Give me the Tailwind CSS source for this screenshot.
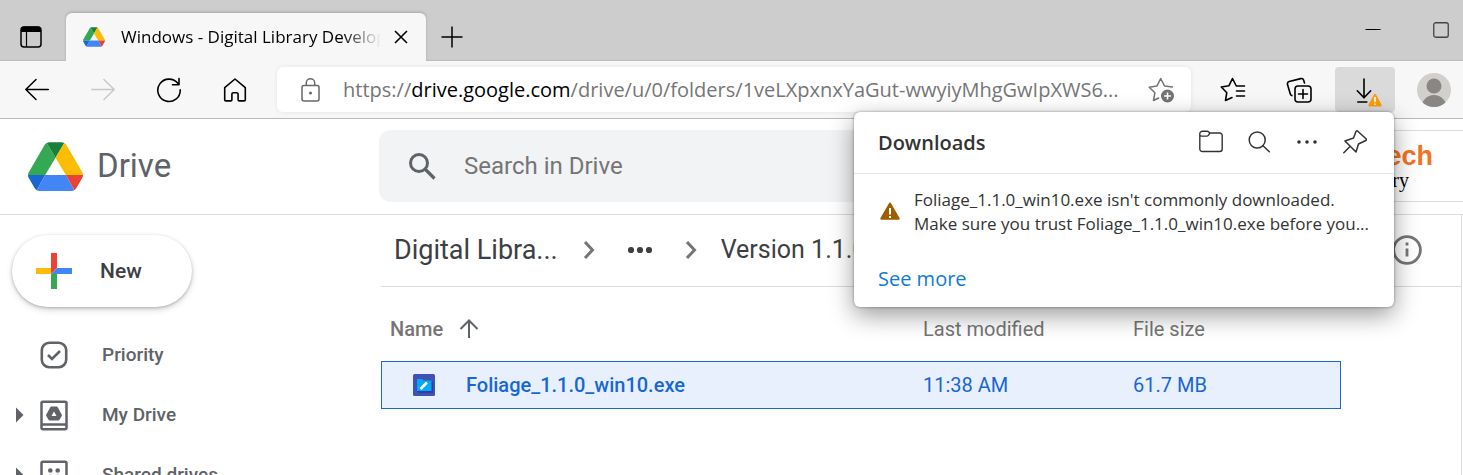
<!DOCTYPE html>
<html lang="en">
<head>
<meta charset="utf-8">
<meta name="viewport" content="width=device-width, initial-scale=1">
<title>Windows - Digital Library Development</title>
<script src="https://cdn.jsdelivr.net/npm/@tailwindcss/browser@4"></script>
</head>
<body class="flex h-screen flex-col overflow-hidden bg-white font-['Open_Sans','Noto_Sans',sans-serif] text-black">

<svg class="hidden" aria-hidden="true">
  <symbol id="drive" viewBox="0 0 88 78">
    <path fill="#34a853" d="M30 1.200 44 25 27.500 52.500H0Q0 50.500 1 48.500L26.500 4.500Q28 2 30 1.200z"/>
    <path fill="#188038" d="M30 1.200Q32 0 34.500 0h19Q56 0 58 1.200L44 25z"/>
    <path fill="#fbbc04" d="M58 1.200Q60 2.500 61.500 4.500L87 48.500Q88 50.500 88 52.500H60.500L44 25z"/>
    <path fill="#1967d2" d="M0 52.500h27.500L14 76.800Q12 75.500 10.500 73.500L1 57Q0 55 0 52.500z"/>
    <path fill="#ea4335" d="M88 52.500H60.500L74 76.800Q76 75.500 77.500 73.500L87 57Q88 55 88 52.500z"/>
    <path fill="#4285f4" d="M27.500 52.500h33L74 76.800Q72 78 69.500 78h-51Q16 78 14 76.800z"/>
  </symbol>
</svg>

<!-- Tab strip -->
<header class="flex h-[61px] shrink-0 items-end bg-[#cdcdcd] shadow-[inset_0_-2px_1px_-1px_#bcbcbc]">
  <button class="flex h-12 w-[66px] items-center pl-5" aria-label="Tab actions">
    <svg class="size-[22px]" viewBox="0 0 22 22"><rect x="1" y="1" width="20" height="20" rx="3" fill="none" stroke="#000" stroke-width="1.500"/><path d="M1 3.500A3 3 0 0 1 4 .5h14a3 3 0 0 1 3 3V6H1z"/><path d="M6.500 6v15" stroke="#000" stroke-width="1.200"/></svg>
  </button>
  <div class="flex h-12 w-[360px] items-center rounded-t-md bg-[#f7f7f7] pr-[18px] pl-[17px] shadow-[0_-1px_3px_#00000030]">
    <svg class="h-5 w-[22px] shrink-0"><use href="#drive"/></svg>
    <span class="ml-4 w-[260px] overflow-hidden mask-r-from-85% mask-r-to-100% text-[17px] leading-6 whitespace-nowrap">Windows - Digital Library Development</span>
    <button class="ml-auto" aria-label="Close tab"><svg class="size-[14px]" viewBox="0 0 14 14"><path d="m1 1 12 12M13 1 1 13" stroke="#000" stroke-width="1.600"/></svg></button>
  </div>
  <button class="flex h-12 w-[52px] items-center justify-center" aria-label="New tab"><svg class="size-[22px]" viewBox="0 0 22 22"><path d="M11 .5v21M.5 11h21" stroke="#000" stroke-width="1.500"/></svg></button>
  <div class="ml-auto flex h-full items-start">
    <button class="flex h-[60px] w-[68px] items-center justify-center" aria-label="Minimize"><svg class="h-[16px] w-[16px]" viewBox="0 0 16 16"><path d="M.5 7.500h15" stroke="#000"/></svg></button>
    <button class="flex h-[60px] w-[56px] items-center justify-end pr-[14px]" aria-label="Maximize"><svg class="size-[16px]" viewBox="0 0 16 16"><rect x=".75" y=".75" width="14.500" height="14.500" rx="2" fill="none" stroke="#444" stroke-width="1.300"/></svg></button>
  </div>
</header>

<!-- Toolbar -->
<nav class="z-20 flex shrink-0 gap-[6px] border-b border-[#b9b9b9] bg-[#f7f7f7] py-[6px] pr-1 pl-[7px]" aria-label="Browser toolbar">
  <button class="flex h-[45px] w-[60px] items-center justify-center" aria-label="Back"><svg class="size-6" viewBox="0 0 24 24" fill="none" stroke="#000" stroke-width="1.500" stroke-linecap="round" stroke-linejoin="round"><path d="M23.300 11.500H.8M11 1.500 .8 11.500l10.200 10"/></svg></button>
  <button class="flex h-[45px] w-[60px] items-center justify-center" aria-label="Forward" disabled><svg class="size-6" viewBox="0 0 24 24" fill="none" stroke="#c8c8c8" stroke-width="1.500" stroke-linecap="round" stroke-linejoin="round"><path d="M.7 11.500h22.500M13 1.500l10.200 10L13 21.500"/></svg></button>
  <button class="flex h-[45px] w-[60px] items-center justify-center" aria-label="Refresh"><svg class="size-[26px]" viewBox="0 0 26 26" fill="none" stroke="#000" stroke-width="1.600" stroke-linecap="round" stroke-linejoin="round"><path d="M24.200 12.800A11.200 11.200 0 1 1 22 6.600M23 1.500v6.300h-6.500"/></svg></button>
  <button class="flex h-[45px] w-[60px] items-center justify-center" aria-label="Home"><svg class="size-6" viewBox="0 0 24 24" fill="none" stroke="#000" stroke-width="1.600" stroke-linejoin="round"><path d="M1.700 9.700 12 1l10.300 8.700v12a1.200 1.200 0 0 1-1.200 1.200h-4.800a1.200 1.200 0 0 1-1.200-1.200v-5.400a1.600 1.600 0 0 0-1.600-1.600h-3a1.600 1.600 0 0 0-1.600 1.600v5.400a1.200 1.200 0 0 1-1.200 1.200H2.900a1.200 1.200 0 0 1-1.200-1.200z"/></svg></button>
  <div class="mx-[6px] flex h-[45px] min-w-0 flex-1 items-center rounded-md bg-white pr-4 pl-6 shadow-[0_0_5px_#00000014]">
    <button aria-label="Site information" class="shrink-0"><svg class="h-6 w-[19px]" viewBox="0 0 19 24" fill="none" stroke="#686868" stroke-width="1.500"><rect x="1" y="7.500" width="17" height="15.500" rx="2"/><path d="M5.300 7.500V5a4.200 4.200 0 0 1 8.400 0v2.500"/><circle cx="9.500" cy="15" r="1.500" fill="#686868" stroke="none"/></svg></button>
    <div role="textbox" contenteditable="true" spellcheck="false" aria-label="Address" class="ml-[23px] min-w-0 flex-1 truncate text-[20px] leading-7 text-[#767676]">https://<span class="text-black">drive.google.com</span>/drive/u/0/folders/1veLXpxnxYaGut-wwyiyMhgGwIpXWS6...</div>
    <button class="shrink-0" aria-label="Add to favorites"><svg class="size-7" viewBox="0 0 28 28"><path fill="none" stroke="#737373" stroke-width="1.500" stroke-linejoin="round" stroke-linecap="round" d="M25.500 11 17.500 9.900 13.700 2.500 10 9.900 2.200 11.200 7.900 16.700 6.500 24.500 11.600 22"/><circle cx="20.500" cy="20" r="6.500" fill="#737373"/><path d="M20.500 16.500v7M17 20h7" stroke="#fff" stroke-width="1.600"/></svg></button>
  </div>
  <button class="flex h-[45px] w-[60px] items-center justify-center" aria-label="Favorites"><svg class="size-7" viewBox="0 0 28 28" fill="none" stroke="#000" stroke-width="1.600" stroke-linecap="round" stroke-linejoin="round"><path d="M25.500 10H17.300L13.500 2.500 10 9.700 2.300 11 7.800 16.700 6.500 24.500 13 21.500M17.500 15h8M17.500 20h8"/></svg></button>
  <button class="flex h-[45px] w-[60px] items-center justify-center" aria-label="Collections"><svg class="size-[26px]" viewBox="0 0 26 26" fill="none" stroke="#000" stroke-width="1.600" stroke-linecap="round" stroke-linejoin="round"><path d="M18.500 6 17.700 3.300a2.500 2.500 0 0 0-3-1.700L3.200 4.600a2.500 2.500 0 0 0-1.700 3L4.300 17a2.500 2.500 0 0 0 1.500 1.600"/><rect x="9" y="9" width="16" height="16" rx="3"/><path d="M17 12.500v9M12.500 17h9"/></svg></button>
  <div class="relative">
    <button class="flex h-[45px] w-[60px] items-center justify-center rounded-sm bg-[#dadada]" aria-label="Downloads"><svg class="size-7 overflow-visible" viewBox="0 0 28 28" fill="none" stroke="#000" stroke-width="1.600" stroke-linecap="round" stroke-linejoin="round"><path d="M13 3v19M6.300 14.800l6.700 7 6.700-7M6.800 26h9"/><path d="M24 19 18.500 29.200h11z" fill="#f89d0e" stroke="#f89d0e" stroke-width="2.400"/><path d="M24 21.500v4M24 28v.3" stroke="#fff"/></svg></button>

    <!-- Downloads flyout -->
    <section class="absolute top-full right-px w-[540px] rounded-md bg-white text-[#333] shadow-[0_0_3px_#00000066,0_8px_24px_#00000066]" aria-label="Downloads">
      <div class="flex h-[62px] items-center border-b border-[#e5e5e5] pr-[26px] pl-6">
        <h2 class="mr-auto text-[20px] leading-7 font-semibold">Downloads</h2>
        <div class="flex gap-6 pr-px pb-[2px]">
          <button aria-label="Open downloads folder"><svg class="size-6" viewBox="0 0 24 24" fill="none" stroke="currentColor" stroke-width="1.400" stroke-linejoin="round"><path d="M.8 4.100V19a2.500 2.500 0 0 0 2.500 2.500h17.400a2.500 2.500 0 0 0 2.500-2.500V5.500A2.500 2.500 0 0 0 20.700 3H11L9.600 1.900A2 2 0 0 0 8 1.300H3.300A2.500 2.500 0 0 0 .8 4.100zM.8 4.500a1.600 1.600 0 0 0 1.600 1.600h5.400a2 2 0 0 0 1.500-.7L11 3"/></svg></button>
          <button aria-label="Search downloads"><svg class="size-6" viewBox="0 0 24 24" fill="none" stroke="currentColor" stroke-width="1.500" stroke-linecap="round"><circle cx="10.200" cy="10" r="8"/><path d="m16 15.700 6.300 6"/></svg></button>
          <button aria-label="More options"><svg class="size-6" viewBox="0 0 24 24" fill="currentColor"><circle cx="4" cy="12" r="1.800"/><circle cx="12" cy="12" r="1.800"/><circle cx="20" cy="12" r="1.800"/></svg></button>
          <button aria-label="Pin"><svg class="size-6" viewBox="0 0 24 24" fill="none" stroke="currentColor" stroke-width="1.500" stroke-linecap="round" stroke-linejoin="round"><path d="M14.500 1Q13.500.5 13 1.500L10.500 8 2 11 13 22l2.500-8 7.300-3.500Q24 10 23.300 9zM7 16.500.8 22.700"/></svg></button>
        </div>
      </div>
      <div class="flex items-center gap-[14px] pt-[14px] pl-[26px]">
        <svg class="size-5 shrink-0" viewBox="0 0 20 20"><path d="M10 1.800 1.500 16.500h17z" fill="#9d5d00" stroke="#9d5d00" stroke-width="2.400" stroke-linejoin="round"/><path d="M10 6v6.500M10 14v2" stroke="#fff" stroke-width="2"/></svg>
        <p class="text-[17px] leading-6 whitespace-nowrap">Foliage_1.1.0_win10.exe isn't commonly downloaded.<br>Make sure you trust Foliage_1.1.0_win10.exe before you...</p>
      </div>
      <div class="px-6 pt-[29px] pb-[14px]"><a href="#" class="block w-fit text-[20px] leading-7 text-[#0f7bd0]">See more</a></div>
    </section>
  </div>
  <button class="ml-[8px] flex h-[45px] w-[50px] items-center justify-center" aria-label="Profile"><svg class="size-[34px]" viewBox="0 0 34 34"><clipPath id="av"><circle cx="17" cy="17" r="17"/></clipPath><g clip-path="url(#av)"><rect width="34" height="34" fill="#d2d0cc"/><circle cx="17" cy="13" r="7.500" fill="#8a8683"/><circle cx="17" cy="34.500" r="12.500" fill="#8a8683"/></g></svg></button>
</nav>

<!-- Drive header -->
<div class="flex h-24 shrink-0 items-center border-b border-[#dadce0] pb-px font-[Roboto,sans-serif]">
  <a href="#" class="flex w-[379px] shrink-0 items-center pl-7 text-[33px] leading-10 text-[#5f6368]"><svg class="mr-[14px] h-[49px] w-[55px]"><use href="#drive"/></svg>Drive</a>
  <label class="flex h-[72px] min-w-0 flex-1 items-center rounded-xl bg-[#f1f3f4] pl-[30px]">
    <svg class="size-[27px] shrink-0" viewBox="0 0 27 27" fill="none" stroke="#5f6368"><circle cx="10" cy="10" r="8.500" stroke-width="3"/><path d="m16 16 9.500 9.500" stroke-width="3.200"/></svg>
    <input type="text" aria-label="Search in Drive" placeholder="Search in Drive" class="ml-7 min-w-0 flex-1 bg-transparent text-[24px] leading-8 outline-none placeholder:text-[#757575]">
  </label>
  <div class="ml-24 flex h-[72px] w-[160px] flex-col items-end justify-center border-y border-[#dadce0] pr-[30px]">
    <span class="font-['Liberation_Sans',sans-serif] text-[27px] leading-7 font-bold text-[#f47321]">Caltech</span>
    <span class="pr-6 font-['Liberation_Serif',serif] text-[20px] leading-5 text-black">Library</span>
  </div>
</div>

<div class="flex min-h-0 flex-1 font-[Roboto,sans-serif]">
  <!-- Sidebar -->
  <aside class="w-[381px] shrink-0 pt-5">
    <button class="ml-3 flex h-[72px] w-[180px] items-center rounded-full bg-white pl-6 text-[21px] leading-7 font-medium text-[#3c4043] shadow-[0_1px_3px_#3c40434d,0_3px_6px_#3c404330]">
      <svg class="mr-7 size-9" viewBox="0 0 36 36"><path fill="#ea4335" d="M15 0h6v15l-6 6z"/><path fill="#fbbc04" d="M0 15h15v6H0z"/><path fill="#34a853" d="M15 21h6v15h-6z"/><path fill="#4285f4" d="M21 15h15v6H15z"/></svg>New
    </button>
    <nav class="mt-[18px] text-[19px] leading-6 font-medium text-[#5f6368]" aria-label="Drive sections">
      <a href="#" class="flex h-[60px] items-center pl-4"><span class="w-6"></span><svg class="size-7" viewBox="0 0 28 28" fill="none" stroke="currentColor" stroke-width="2.600"><rect x="1.800" y="1.800" width="24.400" height="24.400" rx="7.500"/><path d="m8 14 4 4 8-8"/></svg><span class="ml-[34px]">Priority</span></a>
      <a href="#" class="flex h-[60px] items-center pl-4"><svg class="mr-4 h-4 w-2" viewBox="0 0 8 16" fill="currentColor"><path d="M0 .5 7.500 8 0 15.500z"/></svg><svg class="h-[31px] w-7" viewBox="0 0 28 31" fill="none" stroke="currentColor" stroke-width="2.500"><rect x="1.500" y="1.800" width="25" height="27.500" rx="1.500"/><path d="M1.500 24.500h25"/><path fill="currentColor" fill-rule="evenodd" stroke="none" d="M11.500 6.500h5q.8 0 1.200.7l4 7.300q.5.800 0 1.600l-2.200 3.700q-.4.700-1.200.7H9.700q-.8 0-1.200-.7l-2.200-3.700q-.5-.8 0-1.600l4-7.300q.4-.7 1.200-.7zM14 11.500 11.500 16h5z"/></svg><span class="ml-[34px]">My Drive</span></a>
      <a href="#" class="flex h-[60px] items-center pl-4"><svg class="mr-4 h-4 w-2" viewBox="0 0 8 16" fill="currentColor"><path d="M0 .5 7.500 8 0 15.500z"/></svg><svg class="h-[31px] w-7" viewBox="0 0 28 31" fill="none" stroke="currentColor" stroke-width="2.500"><rect x="1.500" y="1.800" width="25" height="27.500" rx="1.500"/><path d="M1.500 24.500h25"/><g fill="currentColor" stroke="none"><circle cx="10.300" cy="10.500" r="2.300"/><circle cx="17.700" cy="10.500" r="2.300"/><path d="M5.500 19c0-5 8-5.500 8.500-2 .5-3.500 8.500-3 8.500 2z"/></g></svg><span class="ml-[34px]">Shared drives</span></a>
    </nav>
  </aside>

  <!-- File list -->
  <main class="mr-px min-w-0 flex-1 border-r border-[#dadce0]">
    <div class="flex h-[72px] items-center border-b border-[#dadce0] pr-[39px] pb-px pl-[13px] leading-9 text-[#3c4043]">
      <button class="text-[27px] whitespace-nowrap">Digital Libra...</button>
      <svg class="ml-[25px] h-5 w-3" viewBox="0 0 12 20" fill="none" stroke="#757575" stroke-width="3"><path d="m2 2 7.500 8L2 18"/></svg>
      <button class="ml-8" aria-label="Show path"><svg class="h-6 w-[26px]" viewBox="0 0 26 24" fill="#3c4043"><circle cx="4" cy="12" r="3.100"/><circle cx="13" cy="12" r="3.100"/><circle cx="22" cy="12" r="3.100"/></svg></button>
      <svg class="ml-8 h-5 w-3" viewBox="0 0 12 20" fill="none" stroke="#757575" stroke-width="3"><path d="m2 2 7.500 8L2 18"/></svg>
      <button class="ml-6 text-[25px] whitespace-nowrap">Version 1.1.0</button>
      <button class="ml-auto" aria-label="View details"><svg class="size-[30px]" viewBox="0 0 30 30" fill="none" stroke="#757575" stroke-width="2.800"><circle cx="15" cy="15" r="13.400"/><path d="M15 13.500v8M15 7.500v3"/></svg></button>
    </div>
    <table class="mt-[18px] w-[960px] table-fixed border-separate border-spacing-0 text-left text-[20px] leading-6">
      <thead>
        <tr class="h-14 text-[#757575]">
          <th class="w-[542px] pb-2 pl-[9px] font-medium"><button class="flex items-center">Name<svg class="ml-4 size-5" viewBox="0 0 20 20" fill="none" stroke="#5f6368" stroke-width="2"><path d="M10 19V2M1.500 10 10 1.500l8.500 8.500"/></svg></button></th>
          <th class="w-[210px] pb-2 font-normal">Last modified</th>
          <th class="pb-2 font-normal">File size</th>
        </tr>
      </thead>
      <tbody>
        <tr class="h-12 bg-[#e8f0fe] text-[#1967d2]">
          <td class="border-y border-l border-[#1967d2] pl-[31px]"><div class="flex items-center font-medium"><svg class="mr-[31px] size-[22px]" viewBox="0 0 22 22"><rect width="22" height="22" rx="1.500" fill="#3f51b5"/><path fill="#303f9f" d="m18.500 7 1.500 1.500V19H6l-2-2z"/><path fill="#03a9f4" d="M4 5h5l1.500 1.500H18.500V17H4z"/><path d="m7.500 15 6.500-6.500" stroke="#fff" stroke-width="2.600"/></svg>Foliage_1.1.0_win10.exe</div></td>
          <td class="border-y border-[#1967d2]">11:38 AM</td>
          <td class="border-y border-r border-[#1967d2]">61.7 MB</td>
        </tr>
      </tbody>
    </table>
  </main>
</div>
</body>
</html>
